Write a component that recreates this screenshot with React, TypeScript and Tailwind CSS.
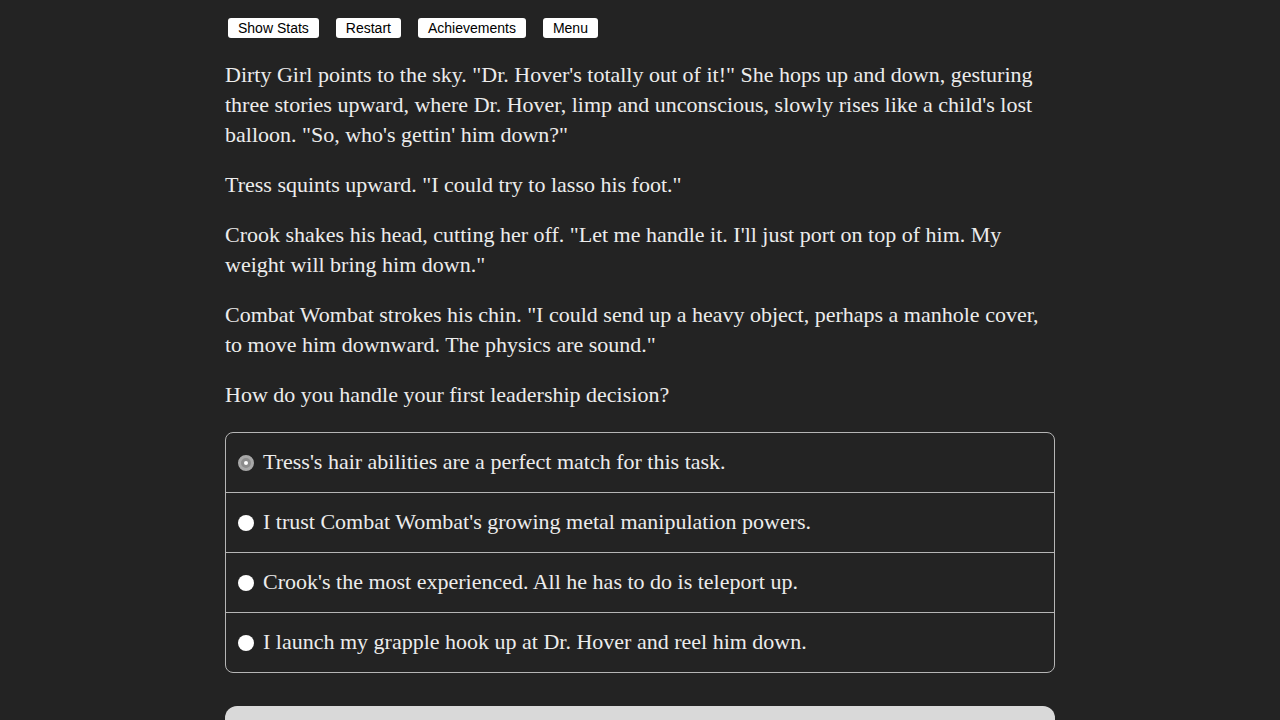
import React from 'react';

// each paragraph is given as its visual lines so the wrap matches
const paragraphs: string[][] = [
  [
    'Dirty Girl points to the sky. "Dr. Hover\'s totally out of it!" She hops up and down, gesturing',
    'three stories upward, where Dr. Hover, limp and unconscious, slowly rises like a child\'s lost',
    'balloon. "So, who\'s gettin\' him down?"',
  ],
  ['Tress squints upward. "I could try to lasso his foot."'],
  [
    'Crook shakes his head, cutting her off. "Let me handle it. I\'ll just port on top of him. My',
    'weight will bring him down."',
  ],
  [
    'Combat Wombat strokes his chin. "I could send up a heavy object, perhaps a manhole cover,',
    'to move him downward. The physics are sound."',
  ],
  ['How do you handle your first leadership decision?'],
];

const choices = [
  "Tress's hair abilities are a perfect match for this task.",
  "I trust Combat Wombat's growing metal manipulation powers.",
  "Crook's the most experienced. All he has to do is teleport up.",
  'I launch my grapple hook up at Dr. Hover and reel him down.',
];

const buttons = ['Show Stats', 'Restart', 'Achievements', 'Menu'];

export default function App() {
  return (
    <div className="min-h-[720px] w-full overflow-hidden bg-[#232323] font-['Liberation_Serif',serif] text-[#ececec]">
      <div className="mx-auto w-[830px] pt-[18px]">
        <div className="flex gap-[17px] pl-[3px]">
          {buttons.map((b) => (
            <button
              key={b}
              className="h-[20px] rounded-[3px] bg-white px-[10px] font-['Liberation_Sans',sans-serif] text-[14px] leading-[20px] text-black"
            >
              {b}
            </button>
          ))}
        </div>

        <div className="mt-[22px] flex flex-col gap-[20px] text-[22px] leading-[30px]">
          {paragraphs.map((p, i) => (
            <p key={i}>
              {p.map((line, j) => (
                <span key={j} className="block whitespace-nowrap">
                  {line}
                </span>
              ))}
            </p>
          ))}
        </div>

        <div className="mt-[22px] overflow-hidden rounded-[8px] border border-[#b5b5b5]">
          {choices.map((c, i) => (
            <div
              key={i}
              className={`flex items-center gap-[9px] pl-[12px] text-[22px] ${i > 0 ? 'h-[60px] border-t border-[#b5b5b5]' : 'h-[59px]'}`}
            >
              {i === 0 ? (
                <span className="flex h-[16px] w-[16px] shrink-0 items-center justify-center rounded-full border-[3px] border-[#a8a8a8] bg-[#8c8c8c]">
                  <span className="h-[4px] w-[4px] rounded-full bg-white" />
                </span>
              ) : (
                <span className="h-[16px] w-[16px] shrink-0 rounded-full bg-white" />
              )}
              <span className="-translate-y-[1px]">{c}</span>
            </div>
          ))}
        </div>

        <div className="mt-[33px] h-[60px] rounded-[12px] bg-[#d9d9d9]" />
      </div>
    </div>
  );
}
